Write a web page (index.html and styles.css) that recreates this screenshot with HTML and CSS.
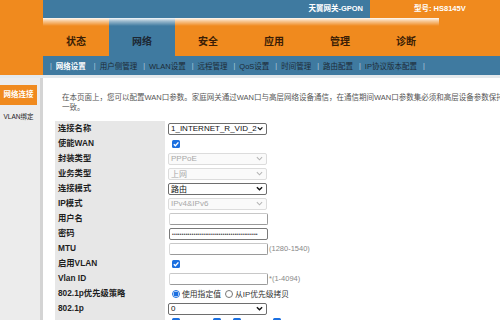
FILE: index.html
```html
<!DOCTYPE html>
<html lang="zh-CN">
<head>
<meta charset="utf-8">
<title>天翼网关-GPON</title>
<link rel="stylesheet" href="styles.css">
</head>
<body>
<header class="hdr">
  <div class="hdr-left"></div>
  <div class="hdr-main">
    <div class="topbar">
      <div class="brand">天翼网关-GPON</div>
      <div class="model">型号: HS8145V</div>
    </div>
    <nav class="tabs">
      <div class="tab">状态</div>
      <div class="tab active">网络</div>
      <div class="tab">安全</div>
      <div class="tab">应用</div>
      <div class="tab">管理</div>
      <div class="tab">诊断</div>
      <div class="tab-rest"></div>
    </nav>
    <nav class="subnav">
      <span class="sep">|</span><span class="sub on">网络设置</span>
      <span class="sep">|</span><span class="sub">用户侧管理</span>
      <span class="sep">|</span><span class="sub">WLAN设置</span>
      <span class="sep">|</span><span class="sub">远程管理</span>
      <span class="sep">|</span><span class="sub">QoS设置</span>
      <span class="sep">|</span><span class="sub">时间管理</span>
      <span class="sep">|</span><span class="sub">路由配置</span>
      <span class="sep">|</span><span class="sub">IP协议版本配置</span>
      <span class="sep">|</span>
    </nav>
  </div>
</header>
<div class="main">
  <aside class="side">
    <div class="side-item on">网络连接</div>
    <div class="side-item">VLAN绑定</div>
  </aside>
  <section class="content">
    <p class="intro"><span class="line">在本页面上，您可以配置WAN口参数。家庭网关通过WAN口与高层网络设备通信，在通信期间WAN口参数集必须和高层设备参数保持</span><br>一致。</p>
    <div class="form">
      <div class="lab">连接名称</div>
      <div class="val"><div class="sel"><span>1_INTERNET_R_VID_2</span><svg class="chev" viewBox="0 0 8 5"><path d="M1 1l3 3 3-3"/></svg></div></div>

      <div class="lab">使能WAN</div>
      <div class="val"><span class="cb"><svg viewBox="0 0 8 8"><path d="M1.8 4.2l1.6 1.6 3-3.4"/></svg></span></div>

      <div class="lab">封装类型</div>
      <div class="val"><div class="sel dis"><span>PPPoE</span><svg class="chev" viewBox="0 0 8 5"><path d="M1 1l3 3 3-3"/></svg></div></div>

      <div class="lab">业务类型</div>
      <div class="val"><div class="sel dis"><span>上网</span><svg class="chev" viewBox="0 0 8 5"><path d="M1 1l3 3 3-3"/></svg></div></div>

      <div class="lab">连接模式</div>
      <div class="val"><div class="sel"><span>路由</span><svg class="chev" viewBox="0 0 8 5"><path d="M1 1l3 3 3-3"/></svg></div></div>

      <div class="lab">IP模式</div>
      <div class="val"><div class="sel dis"><span>IPv4&amp;IPv6</span><svg class="chev" viewBox="0 0 8 5"><path d="M1 1l3 3 3-3"/></svg></div></div>

      <div class="lab">用户名</div>
      <div class="val"><div class="inp"></div></div>

      <div class="lab">密码</div>
      <div class="val"><div class="inp pwd">••••••••••••••••••••••••••••••••••••••••••••</div></div>

      <div class="lab">MTU</div>
      <div class="val"><div class="inp"></div><span class="hint">(1280-1540)</span></div>

      <div class="lab">启用VLAN</div>
      <div class="val"><span class="cb"><svg viewBox="0 0 8 8"><path d="M1.8 4.2l1.6 1.6 3-3.4"/></svg></span></div>

      <div class="lab">Vlan ID</div>
      <div class="val"><div class="inp"></div><span class="hint">*(1-4094)</span></div>

      <div class="lab">802.1p优先级策略</div>
      <div class="val"><span class="rad on"></span><span class="rtxt">使用指定值</span><span class="rad"></span><span class="rtxt">从IP优先级拷贝</span></div>

      <div class="lab">802.1p</div>
      <div class="val"><div class="sel"><span>0</span><svg class="chev" viewBox="0 0 8 5"><path d="M1 1l3 3 3-3"/></svg></div></div>

      <div class="lab"></div>
      <div class="val cbs"><span class="cb"></span><span class="cb"></span><span class="cb"></span><span class="cb"></span></div>
    </div>
  </section>
</div>
</body>
</html>
```

FILE: styles.css
```css
html, body {
  margin: 0;
  padding: 0;
}
body {
  width: 500px;
  height: 320px;
  overflow: hidden;
  background: #fff;
  font-family: "Liberation Sans", "Noto Sans CJK SC", sans-serif;
  color: #222;
}

/* header */
.hdr {
  display: flex;
  height: 75px;
}
.hdr-left {
  width: 43px;
  flex-shrink: 0;
  background: #f08a1e;
}
.hdr-main {
  flex: 1;
  min-width: 0;
  display: flex;
  flex-direction: column;
}
.topbar {
  display: flex;
  height: 18px;
}
.brand {
  width: 327px;
  flex-shrink: 0;
  box-sizing: border-box;
  background: #3f7aa0;
  color: #fff;
  font-weight: bold;
  font-size: 7.5px;
  text-align: right;
  padding-right: 7px;
  line-height: 18px;
}
.model {
  flex: 1;
  background: #f08a1e;
  color: #fff;
  font-weight: bold;
  font-size: 7.5px;
  line-height: 18px;
  padding-left: 44px;
}
.tabs {
  display: flex;
  height: 38px;
  background: #f08a1e;
}
.tab {
  width: 66px;
  flex-shrink: 0;
  display: flex;
  align-items: center;
  justify-content: center;
  padding-top: 6px;
  box-sizing: border-box;
  font-size: 10px;
  font-weight: bold;
  color: #3a1d05;
  background: linear-gradient(to bottom, rgba(255,255,255,0.95) 0px, rgba(255,255,255,0.55) 3px, rgba(255,255,255,0) 8px), #f08a1e;
}
.tab.active {
  background: linear-gradient(to bottom, rgba(255,255,255,0.95) 0px, rgba(255,255,255,0.5) 3px, rgba(255,255,255,0) 8px), #3f7aa0;
  color: #1c2733;
}
.tab-rest {
  flex: 1;
}
.subnav {
  display: flex;
  align-items: center;
  height: 19px;
  background: #3f7aa0;
  padding-left: 7px;
  font-size: 7.5px;
  white-space: nowrap;
}
.sep {
  color: #b9d0df;
  font-size: 7px;
}
.sub {
  color: #1d2a36;
  margin: 0 6px 0 4px;
}
.sub.on {
  color: #fff;
  font-weight: bold;
  margin-right: 8px;
}

/* main */
.main {
  display: flex;
  border-top: 3px solid #e4e9ec;
  height: 242px;
}
.side {
  width: 40px;
  flex-shrink: 0;
  background: #ececec;
  padding-top: 7px;
  box-sizing: border-box;
}
.side-item {
  width: 37px;
  text-align: center;
  font-size: 6.5px;
  color: #222;
  height: 20px;
  line-height: 20px;
  margin-bottom: 2px;
  white-space: nowrap;
}
.side-item.on {
  background: #f08a1e;
  color: #fff;
  font-weight: bold;
  font-size: 7.5px;
}
.content {
  flex: 1;
  min-width: 0;
  background: #fff;
  border-left: 3px solid #d4d4d4;
  padding: 15px 0 0 19px;
}
.intro {
  margin: 0;
  font-size: 7.5px;
  line-height: 9.5px;
  color: #555;
  white-space: nowrap;
}
.form {
  display: grid;
  grid-template-columns: 110px 300px;
  grid-auto-rows: 15px;
  margin: 9px 0 0 -7px;
}
.lab {
  background: #e7e7e7;
  font-size: 8.3px;
  font-weight: bold;
  color: #1e1e1e;
  padding-left: 3px;
  line-height: 15px;
  white-space: nowrap;
}
.val {
  display: flex;
  align-items: center;
  padding-left: 3px;
  font-size: 8px;
}
.sel {
  width: 99px;
  height: 12px;
  box-sizing: border-box;
  border: 1px solid #6e6e6e;
  border-radius: 2px;
  background: #fff;
  display: flex;
  align-items: center;
  justify-content: space-between;
  padding: 0 3px 0 2px;
  font-size: 8px;
  color: #111;
}
.sel.dis {
  border-color: #dcdcdc;
  color: #a8a8a8;
  background: #fafafa;
}
.chev {
  width: 7px;
  height: 5px;
  fill: none;
  stroke: #111;
  stroke-width: 1.6;
}
.sel.dis .chev {
  stroke: #b5b5b5;
  stroke-width: 1.2;
}
.inp {
  width: 99px;
  height: 12px;
  box-sizing: border-box;
  border: 1px solid #9a9a9a;
  border-top-color: #c8c8c8;
  border-left-color: #d8d8d8;
  border-radius: 2px;
  background: #fff;
  margin-left: 1px;
}
.inp.pwd {
  overflow: hidden;
  font-size: 5px;
  line-height: 10px;
  letter-spacing: 0.2px;
  color: #444;
  padding-left: 2px;
  white-space: nowrap;
  border-color: #7a7a7a;
}
.hint {
  font-size: 7.5px;
  color: #888;
  margin-left: 1px;
}
.cb {
  width: 8px;
  height: 8px;
  border-radius: 1.5px;
  background: #1b6fe0;
  margin-left: 4px;
  display: flex;
}
.cb svg {
  width: 8px;
  height: 8px;
  fill: none;
  stroke: #fff;
  stroke-width: 1.4;
}
.cbs {
  align-items: flex-start;
  padding-top: 2px;
}
.cbs .cb:nth-child(2) { margin-left: 33px; }
.cbs .cb:nth-child(3) { margin-left: 12px; }
.cbs .cb:nth-child(4) { margin-left: 32px; }
.rad {
  width: 8px;
  height: 8px;
  box-sizing: border-box;
  border-radius: 50%;
  border: 1px solid #777;
  background: #fff;
  margin-left: 4px;
}
.rad.on {
  border: 1px solid #1b6fe0;
  background: radial-gradient(circle, #1b6fe0 0 2.4px, #fff 2.6px);
}
.rtxt {
  font-size: 7.8px;
  color: #333;
  margin-left: 2px;
}
```
